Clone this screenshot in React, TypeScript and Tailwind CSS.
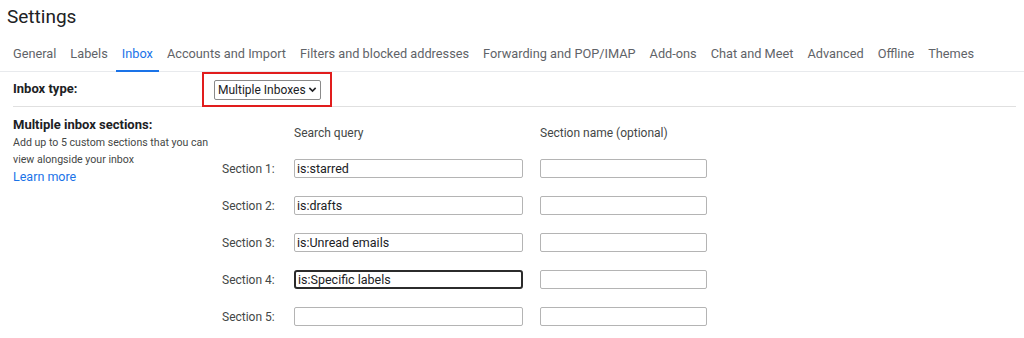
import React from 'react';

const tabs = [
  'General',
  'Labels',
  'Inbox',
  'Accounts and Import',
  'Filters and blocked addresses',
  'Forwarding and POP/IMAP',
  'Add-ons',
  'Chat and Meet',
  'Advanced',
  'Offline',
  'Themes',
];

const sections = [
  { label: 'Section 1:', query: 'is:starred' },
  { label: 'Section 2:', query: 'is:drafts' },
  { label: 'Section 3:', query: 'is:Unread emails' },
  { label: 'Section 4:', query: 'is:Specific labels', focused: true },
  { label: 'Section 5:', query: '' },
];

export default function App() {
  return (
    <div className="w-[1024px] h-[338px] overflow-hidden bg-white font-['Roboto',sans-serif] text-[#202124]">
      {/* Title */}
      <div className="pl-[7px] pt-[4px] h-[37px] text-[19px] leading-[26px] text-[#202124]">Settings</div>

      {/* Tabs */}
      <div className="flex items-end h-[35px] border-b border-[#e8eaed] pl-[7px]">
        {tabs.map((t) => (
          <div
            key={t}
            className={`px-[6px] mr-[2px] h-full flex items-center text-[12.75px] border-b-2 -mb-px ${
              t === 'Inbox' ? 'text-[#1a73e8] border-[#1a73e8]' : 'text-[#5f6368] border-transparent'
            }`}
          >
            {t}
          </div>
        ))}
      </div>

      {/* Inbox type */}
      <div className="flex items-center h-[35px] ml-[13px] mr-[8px] border-b border-[#e0e0e0]">
        <div className="w-[189px] text-[13px] font-bold text-[#202124]">Inbox type:</div>
        <div className="border-2 border-[#e11d1d] h-[35px] w-[130px] flex items-center pl-[10px] mt-px">
          <div className="flex items-center h-[20px] px-[3px] border border-[#8a8a8a] rounded-[2px] bg-white text-[12px] text-[#202124]">
            Multiple Inboxes
            <svg width="9" height="9" viewBox="0 0 10 10" className="ml-[2px]">
              <path d="M1.5 3.2 L5 6.7 L8.5 3.2" fill="none" stroke="#202124" strokeWidth="1.8" />
            </svg>
          </div>
        </div>
      </div>

      {/* Multiple inbox sections */}
      <div className="flex pl-[13px]">
        <div className="w-[209px] pt-[10px]">
          <div className="text-[13px] font-bold leading-[16px] text-[#202124]">Multiple inbox sections:</div>
          <div className="text-[10.6px] leading-[17px] text-[#444746] mt-[1px]">
            Add up to 5 custom sections that you can
            <br />
            view alongside your inbox
          </div>
          <div className="text-[12.5px] leading-[18px] text-[#1a73e8]">Learn more</div>
        </div>

        <div className="pt-[18px]">
          <div className="flex h-[16px] text-[12px] leading-[16px] text-[#444746]">
            <div className="w-[72px]" />
            <div className="w-[246px]">Search query</div>
            <div>Section name (optional)</div>
          </div>
          <div className="flex flex-col gap-[18px] mt-[18px]">
            {sections.map((s) => (
              <div key={s.label} className="flex items-center h-[19px]">
                <div className="w-[72px] text-[12px] text-[#444746]">{s.label}</div>
                <input
                  readOnly
                  value={s.query}
                  className={`w-[229px] h-[19px] px-[2px] text-[12.5px] text-[#202124] bg-white outline-none ${
                    s.focused ? 'border-2 border-[#2b2b2b] rounded-[3px]' : 'border border-[#b4b4b4] rounded-[2px]'
                  }`}
                />
                <input
                  readOnly
                  value=""
                  className="ml-[17px] w-[167px] h-[19px] px-[2px] text-[12.5px] bg-white border border-[#b4b4b4] rounded-[2px] outline-none"
                />
              </div>
            ))}
          </div>
        </div>
      </div>
    </div>
  );
}
